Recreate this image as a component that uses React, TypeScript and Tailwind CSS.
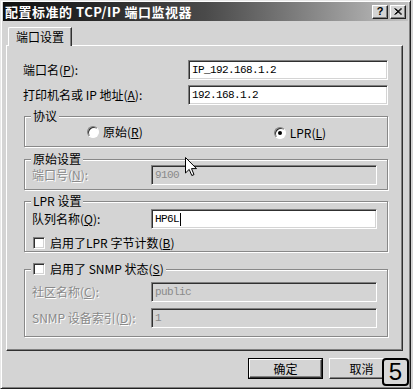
import React from "react";

const cjk = "font-['Noto_Sans_CJK_SC','Noto_Sans',sans-serif]";

function U({ children }: { children: React.ReactNode }) {
  return <span className="underline underline-offset-[1px]">{children}</span>;
}

function Field({ value, disabled, w, caret }: { value: string; disabled?: boolean; w: string; caret?: boolean }) {
  return (
    <div
      className={`${w} h-[20px] box-border border border-t-[#808080] border-l-[#808080] border-b-white border-r-white shadow-[inset_1px_1px_0_#303030,inset_-1px_-1px_0_#d4d4d4] ${
        disabled ? "bg-[#d4d4d4] text-[#8a8a8a]" : "bg-white text-black"
      } flex items-center pl-[3px] font-['Liberation_Mono',monospace] text-[11px] tracking-[-0.6px]`}
    >
      <span>{value}</span>
      {caret && <span className="ml-[1px] w-[1px] h-[13px] bg-black" />}
    </div>
  );
}

function Group({ label, className, children }: { label: React.ReactNode; className: string; children?: React.ReactNode }) {
  return (
    <div
      className={`relative ml-[17px] w-[364px] box-border border border-[#888888] shadow-[inset_1px_1px_0_#ffffff,1px_1px_0_#ffffff] ${className}`}
    >
      <div className="absolute left-[6px] -top-[8px] bg-[#d4d4d4] px-[2px] leading-[14px] flex items-center">{label}</div>
      {children}
    </div>
  );
}

function Check({ label }: { label: React.ReactNode }) {
  return (
    <div className="flex items-center gap-[5px] leading-[14px]">
      <div className="w-[12px] h-[12px] box-border bg-white border border-t-[#808080] border-l-[#808080] border-b-white border-r-white shadow-[inset_1px_1px_0_#303030,inset_-1px_-1px_0_#d4d4d4]" />
      <span>{label}</span>
    </div>
  );
}

function Radio({ label, checked }: { label: React.ReactNode; checked?: boolean }) {
  return (
    <div className="flex items-center gap-[4px] leading-[14px]">
      <div className="w-[12px] h-[12px] rounded-full box-border bg-white border border-t-[#808080] border-l-[#808080] border-b-white border-r-white shadow-[inset_1px_1px_0_#303030] flex items-center justify-center">
        {checked && <div className="w-[4px] h-[4px] rounded-full bg-black" />}
      </div>
      <span>{label}</span>
    </div>
  );
}

function Btn({ children, def }: { children: React.ReactNode; def?: boolean }) {
  return (
    <div className={`w-[75px] h-[21px] box-border ${def ? "border border-black" : ""}`}>
      <div className="w-full h-full box-border border border-t-white border-l-white border-b-[#303030] border-r-[#303030] shadow-[inset_-1px_-1px_0_#808080] flex items-center justify-center leading-[14px]">
        {children}
      </div>
    </div>
  );
}

const dis = "text-[#8a8a8a] [text-shadow:1px_1px_0_#ffffff]";

export default function App() {
  return (
    <div className={`relative w-[413px] h-[389px] overflow-hidden bg-[#d4d4d4] ${cjk} text-[12px] text-black`}>
      <div className="w-[411px] h-[389px] box-border border border-t-[#e8e8e8] border-l-[#e8e8e8] border-b-[#202020] border-r-[#202020] shadow-[inset_1px_1px_0_#ffffff,inset_-1px_-1px_0_#808080] pt-[1px]">
        {/* title bar */}
        <div className="mx-[2px] h-[19px] bg-gradient-to-r from-[#101010] via-[#4a4a4a] to-[#c2c2c2] flex items-center justify-between pl-[2px] pr-[2px]">
          <span className="text-white font-bold text-[13px] tracking-[0.5px] leading-[16px]">配置标准的 TCP/IP 端口监视器</span>
          <div className="flex gap-[2px]">
            <div className="w-[16px] h-[14px] box-border bg-[#d4d4d4] border border-t-white border-l-white border-b-[#202020] border-r-[#202020] shadow-[inset_-1px_-1px_0_#808080] flex items-center justify-center font-['Liberation_Sans',sans-serif] font-bold text-[11px] leading-none">
              ?
            </div>
            <div className="w-[16px] h-[14px] box-border bg-[#d4d4d4] border border-t-white border-l-white border-b-[#202020] border-r-[#202020] shadow-[inset_-1px_-1px_0_#808080] flex items-center justify-center">
              <svg width="8" height="7" viewBox="0 0 8 7">
                <path d="M0.5 0.5 L7 6.5 M1.5 0.5 L8 6.5 M7 0.5 L0.5 6.5 M8 0.5 L1.5 6.5" stroke="#000" strokeWidth="1" />
              </svg>
            </div>
          </div>
        </div>

        {/* tab */}
        <div className="mt-[6px] pl-[7px] h-[18px] flex">
          <div className="relative z-10 w-[64px] h-[19px] box-border bg-[#d4d4d4] border-t border-l border-t-white border-l-white border-r border-r-[#303030] rounded-tl-[2px] shadow-[inset_-1px_0_0_#808080] flex items-start justify-center pt-[2px] leading-[14px]">
            端口设置
          </div>
        </div>

        {/* panel */}
        <div className="ml-[5px] w-[397px] h-[306px] box-border border border-t-white border-l-white border-b-[#303030] border-r-[#303030] shadow-[inset_-1px_-1px_0_#808080] flex flex-col">
          <div className="mt-[14px] pl-[16px] flex items-center">
            <span className="w-[165px] leading-[14px]">
              端口名(<U>P</U>):
            </span>
            <Field value="IP_192.168.1.2" w="w-[200px]" />
          </div>
          <div className="mt-[5px] pl-[16px] flex items-center">
            <span className="w-[165px] leading-[14px]">
              打印机名或 IP 地址(<U>A</U>):
            </span>
            <Field value="192.168.1.2" w="w-[200px]" />
          </div>

          <Group label="协议" className="mt-[11px] h-[31px]">
            <div className="pt-[6px] pl-[62px] flex items-center">
              <Radio label={<>原始(<U>R</U>)</>} />
              <div className="ml-[131px] mt-[3px]">
                <Radio checked label={<>LPR(<U>L</U>)</>} />
              </div>
            </div>
          </Group>

          <Group label="原始设置" className="mt-[12px] h-[31px]">
            <div className="pt-[5px] pl-[7px] flex items-center">
              <span className={`w-[119px] leading-[14px] ${dis}`}>
                端口号(<U>N</U>):
              </span>
              <Field value="9100" disabled w="w-[226px]" />
            </div>
          </Group>

          <Group label="LPR 设置" className="mt-[11px] h-[51px]">
            <div className="pt-[7px] pl-[7px] flex items-center">
              <span className="w-[119px] leading-[14px]">
                队列名称(<U>Q</U>):
              </span>
              <Field value="HP6L" caret w="w-[226px]" />
            </div>
            <div className="mt-[7px] pl-[8px]">
              <Check label={<>启用了LPR 字节计数(<U>B</U>)</>} />
            </div>
          </Group>

          <Group label={<Check label={<>启用了 SNMP 状态(<U>S</U>)</>} />} className="mt-[17px] h-[68px]">
            <div className="pt-[12px] pl-[7px] flex items-center">
              <span className={`w-[119px] leading-[14px] ${dis}`}>
                社区名称(<U>C</U>):
              </span>
              <Field value="public" disabled w="w-[226px]" />
            </div>
            <div className="mt-[6px] pl-[7px] flex items-center">
              <span className={`w-[119px] leading-[14px] ${dis}`}>
                SNMP 设备索引(<U>D</U>):
              </span>
              <Field value="1" disabled w="w-[226px]" />
            </div>
          </Group>
        </div>

        {/* buttons */}
        <div className="mt-[7px] pl-[247px] flex gap-[6px]">
          <Btn def>确定</Btn>
          <Btn>
            <span className="pr-[10px]">取消</span>
          </Btn>
        </div>
      </div>

      {/* step badge */}
      <div className="absolute left-[382px] top-[358px] w-[27px] h-[28px] box-border border-2 border-black rounded-[4px] bg-[#d8d8d8] flex items-center justify-center font-['Liberation_Sans',sans-serif] text-[24px] leading-none">
        5
      </div>

      {/* mouse cursor */}
      <svg className="absolute left-[185px] top-[157px]" width="13" height="20" viewBox="0 0 13 20">
        <path d="M0.5 0.5 L0.5 16 L4.2 12.4 L6.8 18.5 L9 17.6 L6.5 11.6 L11.5 11.6 Z" fill="#fff" stroke="#000" strokeWidth="1" strokeLinejoin="miter" />
      </svg>
    </div>
  );
}
